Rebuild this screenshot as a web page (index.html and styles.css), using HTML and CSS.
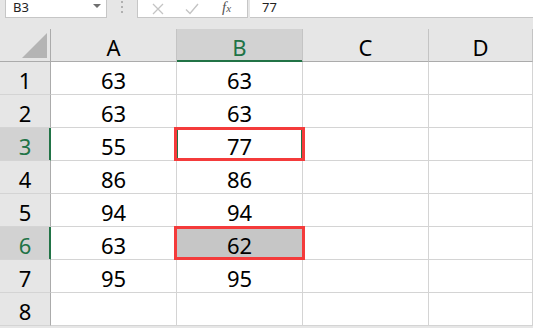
FILE: index.html
```html
<!DOCTYPE html>
<html lang="zh-CN">
<head>
  <meta charset="UTF-8" />
  <title>Book1 - Excel</title>
  <link rel="stylesheet" href="styles.css">
</head>
<body>
  <div class="formula-bar">
    <div class="name-box">
      <span>B3</span>
      <span class="drop"></span>
    </div>
    <div class="grip"><i></i><i></i><i></i></div>
    <div class="fx-tools">
      <svg class="tool" width="12" height="12" viewBox="0 0 12 12"><path d="M1 1 L11 11 M11 1 L1 11" stroke="#c4c4c4" stroke-width="1.3" fill="none"/></svg>
      <svg class="tool" width="14" height="12" viewBox="0 0 14 12"><path d="M1 6.5 L5 10.5 L13 1" stroke="#c4c4c4" stroke-width="1.4" fill="none"/></svg>
      <span class="fx">f<small>x</small></span>
    </div>
    <div class="formula-input">77</div>
  </div>

  <div class="sheet">
    <div class="corner"><svg width="25" height="25" viewBox="0 0 25 25"><polygon points="25,0 25,25 0,25" fill="#b4b4b4"/></svg></div>
    <div class="col-head">A</div>
    <div class="col-head active">B</div>
    <div class="col-head">C</div>
    <div class="col-head">D</div>

    <div class="row-head">1</div>
    <div class="cell">63</div><div class="cell">63</div><div class="cell"></div><div class="cell"></div>

    <div class="row-head">2</div>
    <div class="cell">63</div><div class="cell">63</div><div class="cell"></div><div class="cell"></div>

    <div class="row-head active">3</div>
    <div class="cell">55</div><div class="cell marked current">77</div><div class="cell"></div><div class="cell"></div>

    <div class="row-head">4</div>
    <div class="cell">86</div><div class="cell">86</div><div class="cell"></div><div class="cell"></div>

    <div class="row-head">5</div>
    <div class="cell">94</div><div class="cell">94</div><div class="cell"></div><div class="cell"></div>

    <div class="row-head active">6</div>
    <div class="cell">63</div><div class="cell marked filled">62</div><div class="cell"></div><div class="cell"></div>

    <div class="row-head">7</div>
    <div class="cell">95</div><div class="cell">95</div><div class="cell"></div><div class="cell"></div>

    <div class="row-head">8</div>
    <div class="cell"></div><div class="cell"></div><div class="cell"></div><div class="cell"></div>
  </div>
</body>
</html>
```

FILE: styles.css
```css
:root {
  --chrome: #e6e6e6;
  --chrome-dark: #d2d2d2;
  --edge: #ababab;
  --grid: #d4d4d4;
  --green: #217346;
  --mark: #f43b3b;
}

* {
  box-sizing: border-box;
}

body {
  margin: 0;
  width: 533px;
  height: 328px;
  overflow: hidden;
  background: var(--chrome);
  font-family: "Noto Sans", "Noto Sans CJK SC", sans-serif;
  color: #000;
}

/* formula bar */

.formula-bar {
  display: flex;
  align-items: flex-start;
  height: 29px;
}

.name-box {
  display: flex;
  align-items: flex-start;
  justify-content: space-between;
  width: 102px;
  height: 18px;
  margin-left: 5px;
  padding: 0 5px 0 7px;
  background: #fff;
  border: 1px solid #c6c6c6;
  border-top: none;
  font-size: 13px;
  line-height: 14px;
  color: #222;
}

.drop {
  width: 0;
  height: 0;
  margin-top: 4px;
  border-left: 4px solid transparent;
  border-right: 4px solid transparent;
  border-top: 4px solid #6f6f6f;
}

.grip {
  display: flex;
  flex-direction: column;
  align-items: center;
  gap: 3px;
  width: 30px;
  padding-top: 1px;
}

.grip i {
  display: block;
  width: 2px;
  height: 2px;
  background: #b0b0b0;
}

.fx-tools {
  display: flex;
  align-items: center;
  width: 111px;
  height: 18px;
  padding-left: 14px;
  background: #fff;
  border: 1px solid #c6c6c6;
  border-top: none;
}

.tool {
  margin-right: 21px;
}

.tool + .tool {
  margin-right: 23px;
}

.fx {
  font-family: "Liberation Serif", serif;
  font-style: italic;
  font-size: 15px;
  line-height: 15px;
  color: #555;
  margin-top: -2px;
}

.fx small {
  font-size: 11px;
}

.formula-input {
  flex: 1;
  height: 18px;
  margin-left: 2px;
  padding-left: 12px;
  background: #fff;
  border-bottom: 1px solid #c6c6c6;
  font-size: 13px;
  line-height: 14px;
  color: #222;
}

/* sheet grid */

.sheet {
  display: grid;
  grid-template-columns: 51px 126px 126px 126px 1fr;
  grid-auto-rows: 33px;
  font-size: 22px;
}

.sheet > div {
  display: flex;
  align-items: center;
  justify-content: center;
  padding-top: 3px;
  border-right: 1px solid var(--grid);
  border-bottom: 1px solid var(--grid);
}

.sheet > .corner {
  align-items: flex-end;
  justify-content: flex-end;
  padding: 0 3px 3px 0;
  border-right-color: var(--edge);
  border-bottom-color: var(--edge);
}

.sheet > .col-head {
  background: var(--chrome);
  border-right-color: #c4c4c4;
  border-bottom-color: var(--edge);
}

.sheet > .col-head.active {
  background: var(--chrome-dark);
  color: var(--green);
  border-bottom-color: var(--green);
  box-shadow: inset 0 -1px 0 var(--green);
}

.sheet > .row-head {
  background: var(--chrome);
  border-right-color: var(--edge);
}

.sheet > .row-head.active {
  background: var(--chrome-dark);
  color: var(--green);
  border-right-color: var(--green);
  box-shadow: inset -1px 0 0 var(--green);
}

.sheet > .cell {
  background: #fff;
}

.cell.marked {
  position: relative;
}

.cell.marked::after {
  content: "";
  position: absolute;
  top: -1px;
  left: -3px;
  right: -3px;
  bottom: -1px;
  border: 3px solid var(--mark);
}

.cell.current::after {
  box-shadow: inset 1px 0 0 var(--green), inset -1px 0 0 var(--green);
}

.sheet > .cell.filled {
  background: #c6c6c6;
}
```
